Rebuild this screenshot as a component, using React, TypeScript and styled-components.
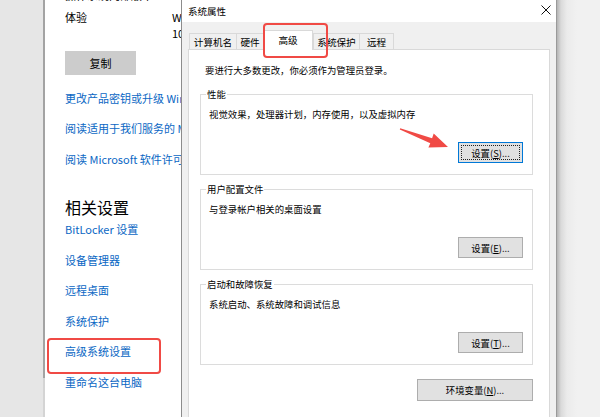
import React from "react";
import styled, { createGlobalStyle } from "styled-components";

const GlobalStyle = createGlobalStyle`
  html, body { margin: 0; padding: 0; width: 600px; height: 417px; overflow: hidden; background: #f0f0f0; }
  * { box-sizing: border-box; }
  body { font-family: "Noto Sans CJK SC", "Noto Sans", sans-serif; }
`;

const FONT = `"Noto Sans CJK SC", "Noto Sans", sans-serif`;

const Screen = styled.div`
  position: relative;
  width: 600px;
  height: 417px;
  display: flex;
  overflow: hidden;
  background: #f0f0f0;
`;

const Backdrop = styled.div`
  width: 43px;
  flex-shrink: 0;
  background: #e6e6e6;
`;

const ScrollTrack = styled.div`
  width: 2px;
  flex-shrink: 0;
  display: flex;
  flex-direction: column;
`;

const ScrollThumb = styled.div`
  height: 378px;
  background: #a3a3a3;
`;

const ScrollRest = styled.div`
  flex: 1;
  background: #d4d4d4;
`;

const SettingsWindow = styled.div`
  width: 136px;
  flex-shrink: 0;
  background: #fff;
  overflow: hidden;
  padding-left: 20px;
  display: flex;
  flex-direction: column;
  font-family: ${FONT};
`;

const InfoList = styled.div`
  margin-top: -13px;
  width: 400px;
  display: flex;
  flex-direction: column;
  gap: 6px;
`;

const InfoRow = styled.div`
  display: grid;
  grid-template-columns: 107px auto;
  font-size: 11px;
  line-height: 16px;
  color: #000;
  white-space: nowrap;
`;

const CopyButton = styled.div`
  margin-top: 10px;
  width: 71px;
  height: 24px;
  flex-shrink: 0;
  background: #cccccc;
  display: flex;
  align-items: center;
  justify-content: center;
  font-size: 11px;
  color: #000;
`;

const Link = styled.div<{ $mt: number }>`
  position: relative;
  margin-top: ${(p) => p.$mt}px;
  font-size: 11px;
  line-height: 16px;
  color: #0a67c4;
  white-space: nowrap;
`;

const HighlightLink = styled(Link)`
  &::after {
    content: "";
    position: absolute;
    left: -18px;
    top: -5.4px;
    width: 110px;
    height: 32px;
    border: 2px solid #f04a45;
    border-radius: 4px;
  }
`;

const SectionHeading = styled.div<{ $mt: number }>`
  margin-top: ${(p) => p.$mt}px;
  font-size: 16px;
  line-height: 22px;
  color: #000;
  white-space: nowrap;
`;

const Dialog = styled.div`
  width: 376px;
  height: 460px;
  flex-shrink: 0;
  border-left: 1px solid #8c8c8c;
  border-right: 1px solid #9a9a9a;
  background: #f0f0f0;
  display: flex;
  flex-direction: column;
  font-family: ${FONT};
  font-size: 9.4px;
  color: #000;
`;

const TitleBar = styled.div`
  height: 22px;
  flex-shrink: 0;
  background: #fff;
  display: flex;
  align-items: center;
  justify-content: space-between;
  padding-left: 6px;
`;

const Title = styled.span`
  font-size: 9.5px;
  line-height: 14px;
  margin-top: -1px;
`;

const CloseBox = styled.div`
  width: 20px;
  height: 20px;
  display: flex;
  align-items: center;
  justify-content: center;
  margin-top: -2px;
`;

const Body = styled.div`
  flex: 1;
  display: flex;
  flex-direction: column;
  padding: 8px 6px 0 6px;
`;

const TabRow = styled.div`
  height: 19px;
  display: flex;
  align-items: flex-start;
  padding-left: 1px;
`;

const Tab = styled.div<{ $w: number; $last?: boolean }>`
  width: ${(p) => p.$w}px;
  height: 16px;
  margin-top: 3px;
  border: 1px solid #d9d9d9;
  border-bottom: none;
  border-right: ${(p) => (p.$last ? "1px solid #d9d9d9" : "none")};
  background: #f0f0f0;
  display: flex;
  align-items: center;
  justify-content: center;
  font-size: 9.6px;
  line-height: 14px;
  white-space: nowrap;
`;

const ActiveTab = styled.div<{ $w: number }>`
  position: relative;
  z-index: 2;
  width: ${(p) => p.$w}px;
  height: 20px;
  border: 1px solid #d9d9d9;
  border-bottom: none;
  background: #fff;
  display: flex;
  align-items: center;
  justify-content: center;
  font-size: 9.6px;
  line-height: 14px;
  padding-bottom: 2px;
  &::after {
    content: "";
    position: absolute;
    left: -1px;
    top: -8px;
    width: 61px;
    height: 31px;
    border: 2px solid #f04a45;
    border-radius: 4px;
  }
`;

const Panel = styled.div`
  flex: 1;
  background: #fff;
  border: 1px solid #d9d9d9;
  padding: 13px 16px 0 11px;
  display: flex;
  flex-direction: column;
`;

const Notice = styled.div`
  margin-left: 5px;
  line-height: 14px;
  white-space: nowrap;
`;

const Group = styled.div<{ $mt: number }>`
  position: relative;
  margin-top: ${(p) => p.$mt}px;
  height: 81px;
  flex-shrink: 0;
  border: 1px solid #dcdcdc;
  padding: 12px 9px 11px 8px;
  display: flex;
  flex-direction: column;
`;

const Legend = styled.span`
  position: absolute;
  left: 5px;
  top: -8px;
  background: #fff;
  padding: 0 1px;
  line-height: 14px;
  white-space: nowrap;
`;

const GroupText = styled.div`
  line-height: 14px;
  white-space: nowrap;
`;

const ButtonRow = styled.div<{ $mt?: number }>`
  margin-top: ${(p) => (p.$mt === undefined ? "auto" : `${p.$mt}px`)};
  display: flex;
  justify-content: flex-end;
`;

const DialogButton = styled.div<{ $w: number; $h: number; $focused?: boolean }>`
  position: relative;
  width: ${(p) => p.$w}px;
  height: ${(p) => p.$h}px;
  background: #e1e1e1;
  border: 1px solid ${(p) => (p.$focused ? "#0078d7" : "#adadad")};
  display: flex;
  align-items: center;
  justify-content: center;
  line-height: 14px;
  white-space: nowrap;
  &::after {
    content: "";
    display: ${(p) => (p.$focused ? "block" : "none")};
    position: absolute;
    inset: 2px;
    border: 1px dotted #222;
  }
  u {
    text-decoration: underline;
    text-underline-offset: 1px;
  }
`;

const Shadow = styled.div`
  flex: 1;
  background: linear-gradient(to right, #b4b4b4 0px, #dadada 4px, #ebebeb 10px, #f1f1f1 20px);
`;

const ArrowSvg = styled.svg`
  position: absolute;
  left: 396px;
  top: 124px;
  width: 56px;
  height: 28px;
  pointer-events: none;
`;

const tabs = [
  { label: "计算机名", w: 47 },
  { label: "硬件", w: 27 },
  { label: "高级", w: 50, active: true },
  { label: "系统保护", w: 46 },
  { label: "远程", w: 35 },
];

export default function App() {
  return (
    <>
      <GlobalStyle />
      <Screen>
        <Backdrop />
        <ScrollTrack>
          <ScrollThumb />
          <ScrollRest />
        </ScrollTrack>
        <SettingsWindow>
          <InfoList>
            <InfoRow>
              <span>操作系统内部版本</span>
              <span>19045.3208</span>
            </InfoRow>
            <InfoRow>
              <span>体验</span>
              <span>
                Windows Feature Experience Pack
                <br />
                1000.19060.1000.0
              </span>
            </InfoRow>
          </InfoList>
          <CopyButton>复制</CopyButton>
          <Link $mt={14.7}>更改产品密钥或升级 Windows</Link>
          <Link $mt={14.7}>阅读适用于我们服务的 Microsoft 服务协议</Link>
          <Link $mt={14.7}>阅读 Microsoft 软件许可条款</Link>
          <SectionHeading $mt={28.6}>相关设置</SectionHeading>
          <Link $mt={3.3}>BitLocker 设置</Link>
          <Link $mt={14.6}>设备管理器</Link>
          <Link $mt={14.6}>远程桌面</Link>
          <Link $mt={14.6}>系统保护</Link>
          <HighlightLink $mt={14.6}>高级系统设置</HighlightLink>
          <Link $mt={14.6}>重命名这台电脑</Link>
        </SettingsWindow>
        <Dialog>
          <TitleBar>
            <Title>系统属性</Title>
            <CloseBox>
              <svg width="10" height="10" viewBox="0 0 10 10">
                <path d="M0.5 0.5 L9.5 9.5 M9.5 0.5 L0.5 9.5" stroke="#111" strokeWidth="1" fill="none" />
              </svg>
            </CloseBox>
          </TitleBar>
          <Body>
            <TabRow>
              {tabs.map((t, i) =>
                t.active ? (
                  <ActiveTab key={t.label} $w={t.w}>
                    {t.label}
                  </ActiveTab>
                ) : (
                  <Tab key={t.label} $w={t.w} $last={i === tabs.length - 1}>
                    {t.label}
                  </Tab>
                )
              )}
            </TabRow>
            <Panel>
              <Notice>要进行大多数更改，你必须作为管理员登录。</Notice>
              <Group $mt={17}>
                <Legend>性能</Legend>
                <GroupText>视觉效果，处理器计划，内存使用，以及虚拟内存</GroupText>
                <ButtonRow>
                  <DialogButton $w={65} $h={21} $focused>
                    设置(<u>S</u>)...
                  </DialogButton>
                </ButtonRow>
              </Group>
              <Group $mt={14}>
                <Legend>用户配置文件</Legend>
                <GroupText>与登录帐户相关的桌面设置</GroupText>
                <ButtonRow>
                  <DialogButton $w={65} $h={21}>
                    设置(<u>E</u>)...
                  </DialogButton>
                </ButtonRow>
              </Group>
              <Group $mt={14}>
                <Legend>启动和故障恢复</Legend>
                <GroupText>系统启动、系统故障和调试信息</GroupText>
                <ButtonRow>
                  <DialogButton $w={65} $h={21}>
                    设置(<u>T</u>)...
                  </DialogButton>
                </ButtonRow>
              </Group>
              <ButtonRow $mt={14}>
                <DialogButton $w={116} $h={22}>
                  环境变量(<u>N</u>)...
                </DialogButton>
              </ButtonRow>
            </Panel>
          </Body>
        </Dialog>
        <Shadow />
        <ArrowSvg viewBox="0 0 56 28">
          <polygon
            points="4.2,4.2 36.1,14.2 37.7,9.6 52,23 32.4,23.6 34.3,19.2 3.8,5.6"
            fill="#f04a45"
          />
        </ArrowSvg>
      </Screen>
    </>
  );
}
